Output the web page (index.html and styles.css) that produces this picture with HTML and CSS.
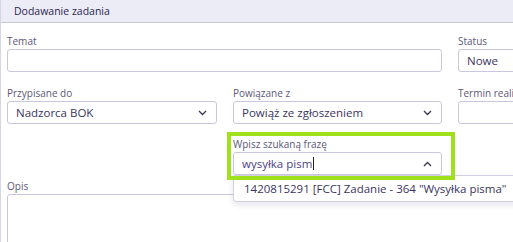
FILE: index.html
```html
<!DOCTYPE html>
<html lang="pl">
<head>
<meta charset="utf-8">
<title>Dodawanie zadania</title>
<link rel="stylesheet" href="styles.css">
</head>
<body>
<div class="card">
  <div class="card-header">Dodawanie zadania</div>
  <div class="form">
    <div class="field span2">
      <label class="label">Temat</label>
      <div class="input"></div>
    </div>
    <div class="field">
      <label class="label">Status</label>
      <div class="input">Nowe</div>
    </div>

    <div class="field">
      <label class="label">Przypisane do</label>
      <div class="input select">Nadzorca BOK
        <svg class="chev" width="9" height="6" viewBox="0 0 9 6"><path d="M1 1l3.5 3.5L8 1" fill="none" stroke="#3a3556" stroke-width="1.3"/></svg>
      </div>
    </div>
    <div class="field">
      <label class="label">Powiązane z</label>
      <div class="input select">Powiąż ze zgłoszeniem
        <svg class="chev" width="9" height="6" viewBox="0 0 9 6"><path d="M1 1l3.5 3.5L8 1" fill="none" stroke="#3a3556" stroke-width="1.3"/></svg>
      </div>
    </div>
    <div class="field">
      <label class="label">Termin realizacji</label>
      <div class="input"></div>
    </div>

    <div class="field col2">
      <div class="search-wrap">
        <div class="results">1420815291 [FCC] Zadanie - 364 "Wysyłka pisma"</div>
        <div class="highlight">
          <label class="label">Wpisz szukaną frazę</label>
          <div class="input search"><span class="typed">wysyłka pism</span><span class="caret"></span>
            <svg class="chev" width="9" height="6" viewBox="0 0 9 6"><path d="M1 5l3.5-3.5L8 5" fill="none" stroke="#3a3556" stroke-width="1.3"/></svg>
          </div>
        </div>
      </div>
    </div>

    <div class="field full opis">
      <label class="label">Opis</label>
      <div class="textarea"></div>
    </div>
  </div>
</div>
</body>
</html>
```

FILE: styles.css
```css
* { box-sizing: border-box; }
html, body { margin: 0; padding: 0; background: #fff; overflow: hidden; }
body { font-family: "Open Sans", "Noto Sans", sans-serif; color: #3a3560; }

.card {
  width: 560px;
  border-left: 1px solid #d6d5e6;
}
.card-header {
  height: 23px;
  background: #ececf6;
  border-bottom: 1px solid #c9c8df;
  padding-left: 13px;
  font-size: 10.5px;
  line-height: 22px;
  color: #2b1f50;
}
.form {
  display: grid;
  grid-template-columns: 210px 209px 210px;
  column-gap: 16px;
  padding: 12px 0 0 6px;
}
.field { display: flex; flex-direction: column; margin-bottom: 15px; }
.span2 { grid-column: span 2; }
.col2 { grid-column: 2; margin-bottom: 0; }
.full { grid-column: 1 / -1; }

.label {
  display: block;
  font-size: 10px;
  line-height: 12px;
  height: 12px;
  color: #5b5878;
  margin-bottom: 2px;
  white-space: nowrap;
}
.input {
  position: relative;
  height: 23px;
  border: 1px solid #c9c7e0;
  border-radius: 3px;
  padding: 0 8px;
  font-size: 11.5px;
  line-height: 21px;
  color: #3a3560;
  display: flex;
  align-items: center;
  white-space: nowrap;
}
.chev { position: absolute; right: 9px; top: 8px; }

.search-wrap { position: relative; margin-top: -7px; height: 48px; }
.highlight {
  position: relative;
  z-index: 3;
  margin-left: -6px;
  width: 228px;
  height: 48px;
  border: 4px solid #9fe21c;
  padding: 2px 9px 0 2px;
}
.search { color: #4b3f86; padding-left: 8px; }
.caret { display: inline-block; width: 1px; height: 13px; background: #222; margin-left: 1px; }
.results {
  position: absolute;
  left: 0;
  top: 43px;
  width: 320px;
  height: 27px;
  border: 1px solid #d2d1e4;
  border-radius: 0 0 3px 3px;
  background: #fff;
  box-shadow: 0 3px 6px rgba(60, 50, 110, 0.12);
  padding: 5px 0 0 10px;
  font-size: 11.5px;
  line-height: 16px;
  color: #3a3560;
  white-space: nowrap;
  z-index: 2;
}

.opis { margin-top: 0; margin-bottom: 0; }
.textarea {
  height: 80px;
  border: 1px solid #c9c7e0;
  border-radius: 3px;
}
```
